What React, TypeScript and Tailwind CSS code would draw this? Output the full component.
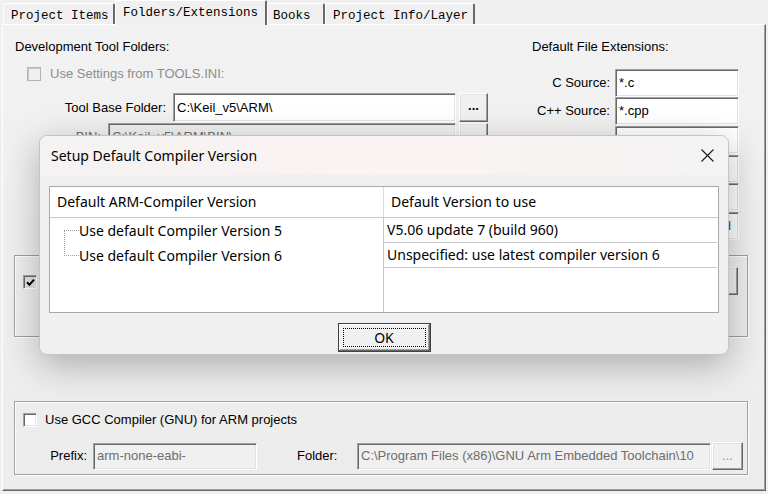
import React from "react";

const sunken =
  "border border-t-[#a0a0a0] border-l-[#a0a0a0] border-b-white border-r-white shadow-[inset_1px_1px_0_#696969,inset_-1px_-1px_0_#e3e3e3]";
const raised =
  "border border-t-white border-l-white border-b-[#696969] border-r-[#696969] shadow-[inset_-1px_-1px_0_#a0a0a0,inset_1px_1px_0_#e3e3e3]";
const etched = "border border-[#a0a0a0] shadow-[1px_1px_0_#ffffff,inset_1px_1px_0_#ffffff]";

function Field({ className, text, disabled, textClass }: { className: string; text?: string; disabled?: boolean; textClass?: string }) {
  return (
    <div
      className={`${sunken} ${className} ${disabled ? "bg-[#f0f0f0] text-[#6d6d6d]" : "bg-white text-black"} flex items-center pl-[3px] overflow-hidden whitespace-nowrap`}
    >
      {text ? <span className={textClass}>{text}</span> : null}
    </div>
  );
}

function Dots({ className, hidden }: { className: string; hidden?: boolean }) {
  return (
    <div className={`${raised} ${className} bg-[#f0f0f0] flex items-center justify-center font-bold text-[13px] leading-none`}>
      {hidden ? null : <span className="-mt-[4px]">...</span>}
    </div>
  );
}

function Check({ checked, disabled }: { checked?: boolean; disabled?: boolean }) {
  if (disabled) {
    return (
      <div className="w-[14px] h-[14px] border border-[#b4b4b4] shadow-[inset_1px_1px_0_#c8c8c8] bg-[#f0f0f0]" />
    );
  }
  return (
    <div
      className={`w-[14px] h-[14px] ${sunken} flex items-center justify-center ${checked ? "bg-[#e3e3e3]" : "bg-white"}`}
    >
      {checked && (
        <svg width="9" height="9" viewBox="0 0 9 9">
          <path d="M1 4.2 L3.4 6.8 L8 1.6" stroke="#000" strokeWidth="2" fill="none" />
        </svg>
      )}
    </div>
  );
}

function Tab({ label, active, className }: { label: string; active?: boolean; className: string }) {
  return (
    <div
      className={`${className} ${
        active
          ? "h-[25px] -mb-[1px] relative z-10 pt-[5px]"
          : "h-[21px] pt-[5px]"
      } bg-[#f0f0f0] border-t border-l border-t-white border-l-white border-r-2 border-r-[#696969] rounded-t-[2px] whitespace-nowrap`}
    >
      {label}
    </div>
  );
}

export default function App() {
  return (
    <div className="relative w-[768px] h-[494px] overflow-hidden bg-[#f0f0f0] text-[13px] leading-[16px] text-black font-['Liberation_Sans',Arial,sans-serif]">
      {/* Tabs */}
      <div className="h-[24px] flex items-end pl-[3px] font-['Liberation_Mono',monospace] text-[12.5px] leading-[14px]">
        <Tab label="Project Items" className="w-[112px] pl-[7px]" />
        <Tab label="Folders/Extensions" active className="w-[152px] pl-[7px]" />
        <Tab label="Books" className="w-[58px] pl-[5px]" />
        <Tab label="Project Info/Layer" className="w-[150px] pl-[7px]" />
      </div>

      {/* Tab page */}
      <div className="ml-[2px] w-[764px] h-[467px] border border-t-white border-l-white border-b-[#696969] border-r-[#696969] shadow-[inset_-1px_-1px_0_#a0a0a0] bg-gradient-to-b from-[#f2f2f2] to-[#ececec]">
        {/* top section */}
        <div className="h-[216px] flex">
          {/* left column */}
          <div className="w-[497px] pl-[12px] pt-[14px]">
            <div className="h-[16px]">Development Tool Folders:</div>
            <div className="mt-[11px] h-[16px] flex items-center pl-[12px] gap-[9px] text-[#8d8d8d]">
              <Check disabled />
              <span>Use Settings from TOOLS.INI:</span>
            </div>
            <div className="mt-[11px] flex items-center h-[29px]">
              <div className="w-[158px] text-right pr-[7px]">Tool Base Folder:</div>
              <Field className="w-[283px] h-[29px]" text="C:\Keil_v5\ARM\" />
              <Dots className="ml-[3px] w-[29px] h-[29px]" />
            </div>
            <div className="mt-[1px] flex items-center h-[28px]">
              <div className="w-[93px] text-right pr-[7px] text-[#6d6d6d]">BIN:</div>
              <Field className="w-[348px] h-[28px]" text="C:\Keil_v5\ARM\BIN\" disabled />
              <Dots className="ml-[3px] w-[29px] h-[28px]" hidden />
            </div>
            {["inc", "lib", "reg"].map((k) => (
              <div key={k} className="mt-[1px] flex items-center h-[28px]">
                <div className="w-[93px]" />
                <Field className="w-[348px] h-[28px]" disabled />
                <Dots className="ml-[3px] w-[29px] h-[28px]" hidden />
              </div>
            ))}
          </div>
          {/* right column */}
          <div className="pl-[32px] pt-[14px]">
            <div className="h-[16px]">Default File Extensions:</div>
            <div className="mt-[14px] flex items-center h-[28px]">
              <div className="w-[83px] text-right pr-[5px]">C Source:</div>
              <Field className="w-[124px] h-[28px]" text="*.c" />
            </div>
            <div className="flex items-center h-[28px]">
              <div className="w-[83px] text-right pr-[5px]">C++ Source:</div>
              <Field className="w-[124px] h-[28px]" text="*.cpp" />
            </div>
            <div className="mt-[1px] flex items-center h-[28px]">
              <div className="w-[83px] text-right pr-[5px]">Asm Source:</div>
              <Field className="w-[124px] h-[28px]" text="*.s*; *.src; *.a*" />
            </div>
            <div className="mt-[1px] flex items-center h-[28px]">
              <div className="w-[83px]" />
              <Field className="w-[124px] h-[28px]" />
            </div>
            <div className="flex items-center h-[28px]">
              <div className="w-[83px]" />
              <Field className="w-[124px] h-[28px]" />
            </div>
            <div className="mt-[1px] flex items-center h-[28px]">
              <div className="w-[83px]" />
              <Field className="w-[124px] h-[28px]" text="*.txt; *.h; *.inc; *.md" textClass="text-[#1f3f9f]" />
            </div>
          </div>
        </div>

        {/* group 1 */}
        <div className={`${etched} mt-[14px] ml-[11px] w-[734px] h-[82px] flex items-start justify-between pl-[8px] pr-[9px] pt-[11px]`}>
          <div className="mt-[8px] flex items-center gap-[9px]">
            <Check checked />
          </div>
          <Dots className="w-[25px] h-[28px]" hidden />
        </div>

        {/* group 2 */}
        <div className={`${etched} mt-[64px] ml-[11px] w-[734px] h-[74px] pl-[8px] pt-[10px]`}>
          <div className="flex items-center gap-[8px] h-[16px]">
            <Check />
            <span>Use GCC Compiler (GNU) for ARM projects</span>
          </div>
          <div className="mt-[14px] flex items-center h-[28px] -ml-[8px]">
            <div className="w-[78px] text-right pr-[6px]">Prefix:</div>
            <Field className="w-[164px] h-[27px]" text="arm-none-eabi-" disabled />
            <div className="w-[100px] pl-[40px]">Folder:</div>
            <Field
              className="w-[354px] h-[27px]"
              text="C:\Program Files (x86)\GNU Arm Embedded Toolchain\10"
              disabled
            />
            <div className={`${raised} ml-[1px] w-[31px] h-[28px] bg-[#f0f0f0] flex items-center justify-center text-[#8d8d8d] text-[13px] leading-none`}>
              <span className="-mt-[2px]">...</span>
            </div>
          </div>
        </div>
      </div>

      {/* Dialog */}
      <div className="absolute left-[39px] top-[135px] w-[690px] h-[220px] rounded-[8px] bg-[#f0f0f0] border border-[#c4c4c4] shadow-[0_10px_36px_rgba(0,0,0,0.28)] overflow-hidden font-['Noto_Sans',sans-serif]">
        <div className="h-[39px] bg-gradient-to-r from-[#f4f2f2] via-[#fbf3f3] to-[#f4f3f3] flex items-center justify-between pl-[11px] pr-[14px]">
          <span className="text-[14px] text-black">Setup Default Compiler Version</span>
          <svg width="13" height="13" viewBox="0 0 13 13">
            <path d="M0.5 0.5 L12.5 12.5 M12.5 0.5 L0.5 12.5" stroke="#1a1a1a" strokeWidth="1.1" fill="none" />
          </svg>
        </div>
        <div className="pl-[9px] pt-[11px]">
          <div className="w-[670px] h-[127px] bg-white border border-[#a8a8a8] text-[14px] leading-[18px] text-black">
            <div className="h-[31px] flex border-b border-[#c8c8c8]">
              <div className="w-[333px] pl-[7px] flex items-center">Default ARM-Compiler Version</div>
              <div className="flex-1 border-l border-[#dcdcdc] pl-[7px] flex items-center">Default Version to use</div>
            </div>
            <div className="flex h-[94px]">
              <div className="w-[333px] relative">
                <div className="absolute left-[14px] top-[12px] h-[26px] border-l border-dotted border-[#a0a0a0]" />
                <div className="h-[25px] flex items-center">
                  <div className="ml-[14px] w-[15px] border-t border-dotted border-[#a0a0a0]" />
                  <span>Use default Compiler Version 5</span>
                </div>
                <div className="h-[25px] flex items-center">
                  <div className="ml-[14px] w-[15px] border-t border-dotted border-[#a0a0a0]" />
                  <span>Use default Compiler Version 6</span>
                </div>
              </div>
              <div className="flex-1 border-l border-[#c8c8c8] pr-[1px]">
                <div className="h-[25px] border-b border-[#c8c8c8] pl-[3px] flex items-center">V5.06 update 7 (build 960)</div>
                <div className="h-[25px] border-b border-[#c8c8c8] pl-[3px] flex items-center">Unspecified: use latest compiler version 6</div>
              </div>
            </div>
          </div>
          <div className="mt-[10px] flex justify-center pr-[9px]">
            <div className="relative w-[93px] h-[29px] border border-[#404040] shadow-[inset_-1px_-1px_0_#696969,inset_1px_1px_0_#ffffff,inset_-2px_-2px_0_#a0a0a0] bg-[#f0f0f0] flex items-center justify-center text-[14px]">
              <div className="absolute inset-[4px] border border-dotted border-black" />
              <span>OK</span>
            </div>
          </div>
        </div>
      </div>
    </div>
  );
}
